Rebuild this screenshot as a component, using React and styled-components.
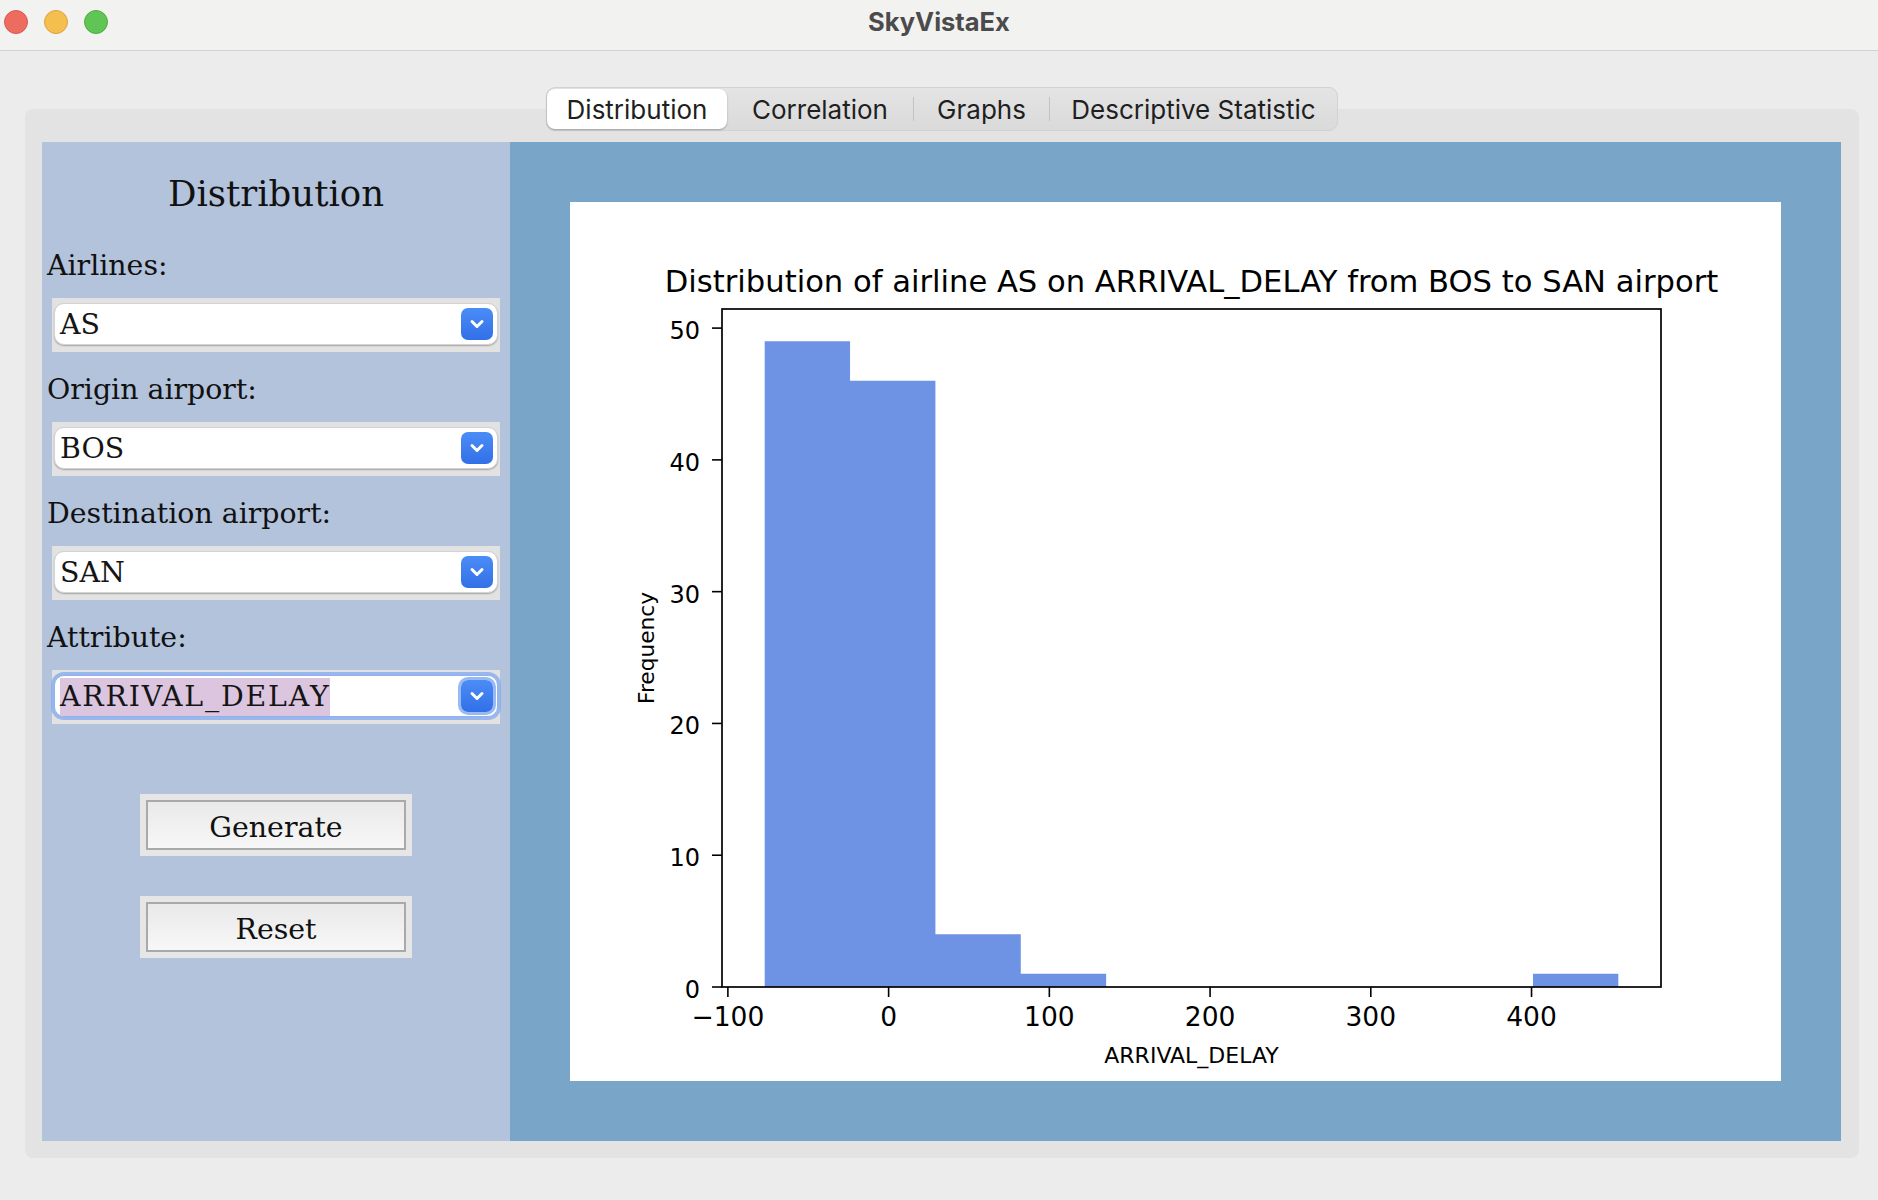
import React from 'react'
import styled, { createGlobalStyle } from 'styled-components'

const GlobalStyle = createGlobalStyle`
    html, body {
        margin: 0;
        padding: 0;
        background: #ececec;
    }
    body {
        width: 1878px;
        height: 1200px;
        overflow: hidden;
    }
`;

const Window = styled.div`
    width: 1878px;
    height: 1200px;
    display: flex;
    flex-direction: column;
    background: #ececec;
`;

const TitleBar = styled.div`
    height: 51px;
    flex: none;
    box-sizing: border-box;
    padding-bottom: 7px;
    display: grid;
    grid-template-columns: 1fr auto 1fr;
    align-items: center;
    background: #f2f2f1;
    border-bottom: 1px solid #d2d2d2;
`;

const Lights = styled.div`
    display: flex;
    gap: 16px;
    padding-left: 4px;
`;

const Light = styled.span`
    width: 24px;
    height: 24px;
    border-radius: 50%;
    box-sizing: border-box;
    background: ${p => p.fill};
    border: 1px solid ${p => p.edge};
`;

const Title = styled.div`
    font-family: Inter, "Noto Sans", sans-serif;
    font-weight: 700;
    font-size: 25.5px;
    color: #4b4b4b;
`;

const Body = styled.div`
    flex: 1;
    display: flex;
    flex-direction: column;
    align-items: center;
    padding: 36px 19px 0 25px;
`;

const TabBar = styled.div`
    position: relative;
    z-index: 1;
    display: flex;
    align-items: center;
    height: 44px;
    box-sizing: border-box;
    padding: 1px 0;
    margin-bottom: -22px;
    border: 1px solid #d2d2d2;
    border-radius: 9px;
    background: linear-gradient(#e4e4e4, #dadada);
`;

const Tab = styled.div`
    width: ${p => p.w}px;
    height: 40px;
    display: flex;
    align-items: center;
    justify-content: center;
    font-family: Inter, "Noto Sans", sans-serif;
    font-size: 26px;
    color: #1f1f1f;
    border-radius: 8px;
    background: ${p => (p.active ? '#ffffff' : 'transparent')};
    box-shadow: ${p => (p.active ? '0 1px 2px rgba(0,0,0,0.28)' : 'none')};
`;

const TabSep = styled.span`
    width: 1px;
    height: 24px;
    background: #c3c3c3;
`;

const Pane = styled.div`
    align-self: stretch;
    height: 1049px;
    box-sizing: border-box;
    display: flex;
    padding: 33px 18px 17px 17px;
    border-radius: 8px;
    background: #e3e3e3;
`;

const Sidebar = styled.div`
    width: 468px;
    flex: none;
    display: flex;
    flex-direction: column;
    background: #b3c3dc;
    font-family: "DejaVu Serif", "Liberation Serif", serif;
    color: #111;
`;

const Heading = styled.div`
    height: 86px;
    box-sizing: border-box;
    padding-top: 34px;
    text-align: center;
    font-size: 35.5px;
    line-height: 1;
`;

const FieldLabel = styled.div`
    height: 70px;
    box-sizing: border-box;
    padding: 24px 0 0 5px;
    font-size: 28.4px;
    line-height: 1;
`;

const ComboFrame = styled.div`
    height: 54px;
    margin: 0 10px;
    box-sizing: border-box;
    padding: 5px 2px 7px;
    background: #e2e2e2;
`;

const ComboField = styled.div`
    height: 42px;
    box-sizing: border-box;
    display: flex;
    align-items: flex-start;
    justify-content: space-between;
    padding: 2px 4px 0 5px;
    border-radius: 10px;
    background: #fff;
    border: 1px solid ${p => (p.focused ? '#8fb2ee' : '#d3d3d3')};
    box-shadow: ${p => (p.focused
        ? '0 0 0 3px rgba(128,168,240,0.75)'
        : '0 1px 1.5px rgba(0,0,0,0.28)')};
`;

const ComboText = styled.span`
    font-size: 28.4px;
    line-height: 38px;
    height: 38px;
    color: #151515;
    letter-spacing: ${p => (p.selected ? '1.8px' : '0')};
    background: ${p => (p.selected ? '#dbc5df' : 'transparent')};
`;

const DropButton = styled.span`
    width: 32px;
    height: 32px;
    margin-top: 2px;
    flex: none;
    display: flex;
    align-items: center;
    justify-content: center;
    border-radius: 7px;
    background: linear-gradient(#4b8df7, #3170e7);
    box-shadow: ${p => (p.focused ? '0 0 0 3px rgba(128,168,240,0.8)' : 'none')};
`;

const ButtonFrame = styled.div`
    align-self: center;
    width: 272px;
    height: 62px;
    box-sizing: border-box;
    padding: 6px;
    margin-top: ${p => p.gap}px;
    background: #e6e6e6;
`;

const PushButton = styled.div`
    height: 50px;
    box-sizing: border-box;
    padding-top: 6px;
    border: 2px solid #a9a9a9;
    background: linear-gradient(#e9e9e9, #f7f7f7);
    text-align: center;
    font-size: 28.4px;
    line-height: 40px;
    color: #111;
`;

const ChartPanel = styled.div`
    flex: 1;
    padding: 60px;
    background: #79a5c9;
`;

const ChartCard = styled.div`
    width: 1211px;
    height: 879px;
    background: #fff;
`;

const ChartText = styled.text`
    font-family: "DejaVu Sans", sans-serif;
    fill: #000;
    font-size: ${p => p.size}px;
`;

function Chevron() {
    return (
        <svg width="16" height="10" viewBox="0 0 16 10">
            <path d="M3 2.5 L8 7.5 L13 2.5" fill="none" stroke="#fff" strokeWidth="3"
                strokeLinecap="round" strokeLinejoin="round" />
        </svg>
    )
}

function Combo({ label, value, focused }) {
    return (
        <>
            <FieldLabel>{label}</FieldLabel>
            <ComboFrame>
                <ComboField focused={focused}>
                    <ComboText selected={focused}>{value}</ComboText>
                    <DropButton focused={focused}><Chevron /></DropButton>
                </ComboField>
            </ComboFrame>
        </>
    )
}

// histogram: 10 bins, data from -77.1 to 454
const edges = Array.from({ length: 11 }, (_, i) => -77.1 + i * 53.11);
const counts = [49, 46, 4, 1, 0, 0, 0, 0, 0, 1];
const AX = { left: 152, top: 107, right: 1091, bottom: 785 };
const X = v => AX.left + (v + 103.66) * 1.6073;
const Y = v => AX.bottom - v * 13.178;

function Histogram() {
    let d = `M${X(edges[0])},${Y(0)}`;
    counts.forEach((c, i) => {
        d += ` L${X(edges[i])},${Y(c)} L${X(edges[i + 1])},${Y(c)}`;
    });
    d += ` L${X(edges[10])},${Y(0)} Z`;

    const yTicks = [0, 10, 20, 30, 40, 50];
    const xTicks = [-100, 0, 100, 200, 300, 400];
    const cx = (AX.left + AX.right) / 2;

    return (
        <svg width="1211" height="879" viewBox="0 0 1211 879">
            <ChartText size={30.6} x={cx} y={90} textAnchor="middle">
                Distribution of airline AS on ARRIVAL_DELAY from BOS to SAN airport
            </ChartText>
            <path d={d} fill="#6f93e4" />
            <rect x={AX.left} y={AX.top} width={AX.right - AX.left} height={AX.bottom - AX.top}
                fill="none" stroke="#000" strokeWidth="1.7" />
            {yTicks.map(v => (
                <g key={v}>
                    <line x1={AX.left - 10} x2={AX.left} y1={Y(v)} y2={Y(v)} stroke="#000" strokeWidth="1.6" />
                    <ChartText size={24} x={130} y={Y(v) + 11} textAnchor="end">{v}</ChartText>
                </g>
            ))}
            {xTicks.map(v => (
                <g key={v}>
                    <line x1={X(v)} x2={X(v)} y1={AX.bottom} y2={AX.bottom + 10} stroke="#000" strokeWidth="1.6" />
                    <ChartText size={26.5} x={X(v)} y={824} textAnchor="middle">
                        {v < 0 ? `\u2212${-v}` : v}
                    </ChartText>
                </g>
            ))}
            <ChartText size={22} x={cx} y={861} textAnchor="middle">ARRIVAL_DELAY</ChartText>
            <ChartText size={21.7} textAnchor="middle"
                transform={`translate(84 ${(AX.top + AX.bottom) / 2}) rotate(-90)`}>
                Frequency
            </ChartText>
        </svg>
    )
}

export default function App() {
    return (
        <>
            <GlobalStyle />
            <Window>
                <TitleBar>
                    <Lights>
                        <Light fill="#ee6b60" edge="#d85a50" />
                        <Light fill="#f5bf4f" edge="#dca23c" />
                        <Light fill="#61c555" edge="#4ead42" />
                    </Lights>
                    <Title>SkyVistaEx</Title>
                    <span />
                </TitleBar>
                <Body>
                    <TabBar>
                        <Tab w={180} active>Distribution</Tab>
                        <Tab w={186}>Correlation</Tab>
                        <TabSep />
                        <Tab w={135}>Graphs</Tab>
                        <TabSep />
                        <Tab w={287}>Descriptive Statistic</Tab>
                    </TabBar>
                    <Pane>
                        <Sidebar>
                            <Heading>Distribution</Heading>
                            <Combo label="Airlines:" value="AS" />
                            <Combo label="Origin airport:" value="BOS" />
                            <Combo label="Destination airport:" value="SAN" />
                            <Combo label="Attribute:" value="ARRIVAL_DELAY" focused />
                            <ButtonFrame gap={70}><PushButton>Generate</PushButton></ButtonFrame>
                            <ButtonFrame gap={40}><PushButton>Reset</PushButton></ButtonFrame>
                        </Sidebar>
                        <ChartPanel>
                            <ChartCard><Histogram /></ChartCard>
                        </ChartPanel>
                    </Pane>
                </Body>
            </Window>
        </>
    )
}
